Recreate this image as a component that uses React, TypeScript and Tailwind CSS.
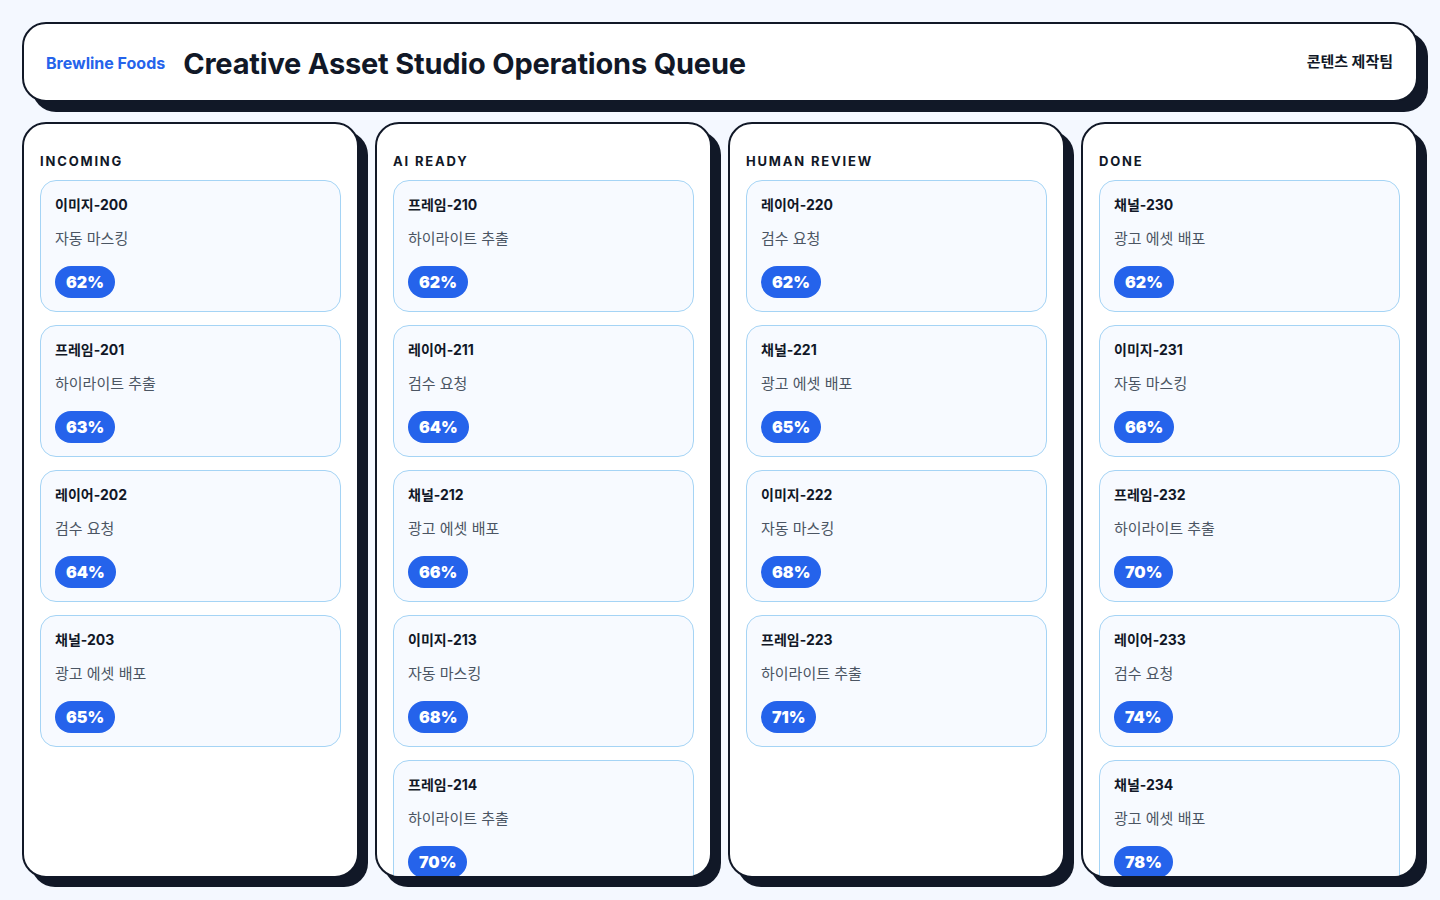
import React from "react";

type Card = { id: string; task: string; pct: number };
type Col = { title: string; cards: Card[] };

const cols: Col[] = [
  {
    title: "INCOMING",
    cards: [
      { id: "이미지-200", task: "자동 마스킹", pct: 62 },
      { id: "프레임-201", task: "하이라이트 추출", pct: 63 },
      { id: "레이어-202", task: "검수 요청", pct: 64 },
      { id: "채널-203", task: "광고 에셋 배포", pct: 65 },
    ],
  },
  {
    title: "AI READY",
    cards: [
      { id: "프레임-210", task: "하이라이트 추출", pct: 62 },
      { id: "레이어-211", task: "검수 요청", pct: 64 },
      { id: "채널-212", task: "광고 에셋 배포", pct: 66 },
      { id: "이미지-213", task: "자동 마스킹", pct: 68 },
      { id: "프레임-214", task: "하이라이트 추출", pct: 70 },
    ],
  },
  {
    title: "HUMAN REVIEW",
    cards: [
      { id: "레이어-220", task: "검수 요청", pct: 62 },
      { id: "채널-221", task: "광고 에셋 배포", pct: 65 },
      { id: "이미지-222", task: "자동 마스킹", pct: 68 },
      { id: "프레임-223", task: "하이라이트 추출", pct: 71 },
    ],
  },
  {
    title: "DONE",
    cards: [
      { id: "채널-230", task: "광고 에셋 배포", pct: 62 },
      { id: "이미지-231", task: "자동 마스킹", pct: 66 },
      { id: "프레임-232", task: "하이라이트 추출", pct: 70 },
      { id: "레이어-233", task: "검수 요청", pct: 74 },
      { id: "채널-234", task: "광고 에셋 배포", pct: 78 },
    ],
  },
];

const font = { fontFamily: 'Inter, "Noto Sans CJK KR", sans-serif' };

export default function App() {
  return (
    <div
      className="h-[900px] w-full bg-[#f4f8ff] p-[22px] flex flex-col gap-[20px] text-[#111827] overflow-hidden"
      style={font}
    >
      <header className="h-[80px] shrink-0 flex items-center justify-between rounded-[24px] border-2 border-[#111827] bg-white px-[22px] shadow-[10px_10px_0_#111827]">
        <div className="flex items-center gap-[18px]">
          <span className="text-[16px] font-bold text-[#2563eb] mt-[1px]">Brewline Foods</span>
          <h1 className="text-[29px] font-bold leading-[36px] tracking-[-0.2px] mt-[4px]">
            Creative Asset Studio Operations Queue
          </h1>
        </div>
        <span className="text-[15px] font-bold mr-[1px]">콘텐츠 제작팀</span>
      </header>
      <div className="flex-1 min-h-0 grid grid-cols-4 gap-[16px]">
        {cols.map((c) => (
          <section
            key={c.title}
            className="min-h-0 overflow-hidden rounded-[24px] border-2 border-[#111827] bg-white shadow-[9px_9px_0_#111827] px-[16px] pt-[27px]"
          >
            <h2 className="text-[13px] font-bold tracking-[0.14em] leading-[20px] text-[#111827]">
              {c.title}
            </h2>
            <div className="mt-[9px] flex flex-col gap-[13px]">
              {c.cards.map((k) => (
                <div
                  key={k.id}
                  className="h-[132px] shrink-0 rounded-[16px] border border-[#a5d4f5] bg-[#f7faff] px-[14px] pt-[14px]"
                >
                  <div className="text-[14px] font-bold leading-[20px] text-[#111827]">{k.id}</div>
                  <div className="mt-[13px] text-[15px] leading-[22px] text-[#4b5563]">{k.task}</div>
                  <div className="mt-[16px] inline-flex h-[32px] items-center rounded-full bg-[#2563eb] px-[11px] text-[16px] font-black text-white">
                    {k.pct}%
                  </div>
                </div>
              ))}
            </div>
          </section>
        ))}
      </div>
    </div>
  );
}
